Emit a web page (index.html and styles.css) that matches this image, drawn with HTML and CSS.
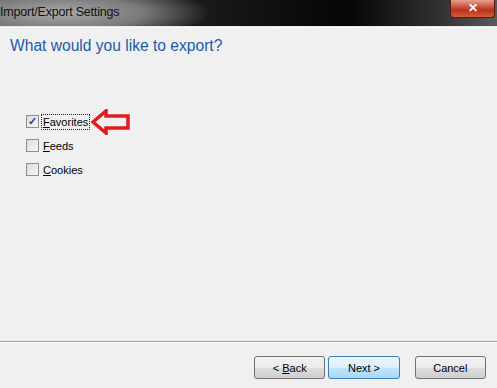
FILE: index.html
```html
<!DOCTYPE html>
<html lang="en">
<head>
    <meta charset="UTF-8">
    <title>Import/Export Settings</title>
    <link rel="stylesheet" href="styles.css">
</head>
<body>
    <div class="window">
        <div class="titlebar">
            <span class="title">Import/Export Settings</span>
            <span class="close-btn">&#x2715;</span>
        </div>
        <div class="content">
            <h1 class="heading">What would you like to export?</h1>
            <div class="options">
                <label class="option">
                    <span class="box checked">&#x2713;</span>
                    <span class="label focused"><u>F</u>avorites</span>
                    <svg class="arrow" width="40" height="26" viewBox="0 0 40 26">
                        <polygon points="2,13 15,2 15,7 37,7 37,19 15,19 15,24" fill="none" stroke="#e01b1b" stroke-width="3.5" stroke-linejoin="miter"/>
                    </svg>
                </label>
                <label class="option">
                    <span class="box"></span>
                    <span class="label"><u>F</u>eeds</span>
                </label>
                <label class="option">
                    <span class="box"></span>
                    <span class="label"><u>C</u>ookies</span>
                </label>
            </div>
        </div>
        <div class="footer">
            <button class="btn">&lt; <u>B</u>ack</button>
            <button class="btn default">Next &gt;</button>
            <button class="btn cancel">Cancel</button>
        </div>
    </div>
</body>
</html>
```

FILE: styles.css
```css
body { margin: 0; background: #f0f0f0; font-family: 'Liberation Sans', Arial, sans-serif; }
.window { width: 497px; height: 388px; display: flex; flex-direction: column; background: #f0f0f0; overflow: hidden; }

.titlebar { height: 26px; flex: none; position: relative; border-bottom: 1px solid #e8e8e8; background: radial-gradient(ellipse 150px 30px at 60px 13px, #a8a8a8 0%, #7a7a7a 55%, rgba(40,40,40,0) 100%), linear-gradient(90deg, #3a3a3a 0%, #1a1a1a 40%, #050505 70%, #303030 88%, #5a5a5a 100%); }
.title { position: absolute; left: 0; top: 5px; font-size: 12.5px; color: #111; letter-spacing: -0.2px; }
.close-btn { position: absolute; right: 2px; top: 0; width: 43px; height: 17px; border: 1px solid #5a1a10; border-top: none; border-radius: 0 0 4px 4px; background: linear-gradient(#e8a090 0%, #c94a32 45%, #b8321c 60%, #d85a3a 100%); color: #fff; font-size: 12px; font-weight: bold; text-align: center; line-height: 16px; }

.content { flex: 1; padding: 0 10px; border-top: 1px solid #fafafa; }
.heading { margin: 9px 0 0; font-size: 15.6px; font-weight: normal; color: #1e5aa8; }
.options { margin: 60px 0 0 16px; display: flex; flex-direction: column; gap: 11px; }
.option { display: flex; align-items: center; height: 13px; font-size: 11px; color: #000; }
.box { width: 11px; height: 11px; border: 1px solid #8e8f8f; background: linear-gradient(135deg, #dcdcdc, #f8f8f8); font-size: 11px; line-height: 11px; text-align: center; color: #2a3f8f; font-weight: bold; }
.label { margin-left: 2px; padding: 1px 1px; border: 1px dotted transparent; }
.label.focused { border-color: #222; }
.arrow { margin-left: 1px; }

.footer { box-sizing: border-box; height: 47px; flex: none; border-top: 1px solid #a0a0a0; box-shadow: inset 0 1px 0 #fff; display: flex; align-items: flex-start; padding: 14px 11px 0 254px; gap: 3px; }
.btn { width: 73px; height: 23px; font-family: inherit; font-size: 11px; color: #000; border: 1px solid #707070; border-radius: 3px; background: linear-gradient(#f2f2f2 0%, #ebebeb 50%, #dddddd 51%, #cfcfcf 100%); padding: 0; }
.btn.default { border-color: #3c7fb1; background: linear-gradient(#eaf6fd 0%, #d9f0fc 50%, #bee6fd 51%, #a7d9f5 100%); }
.btn.cancel { margin-left: 12px; }
```
